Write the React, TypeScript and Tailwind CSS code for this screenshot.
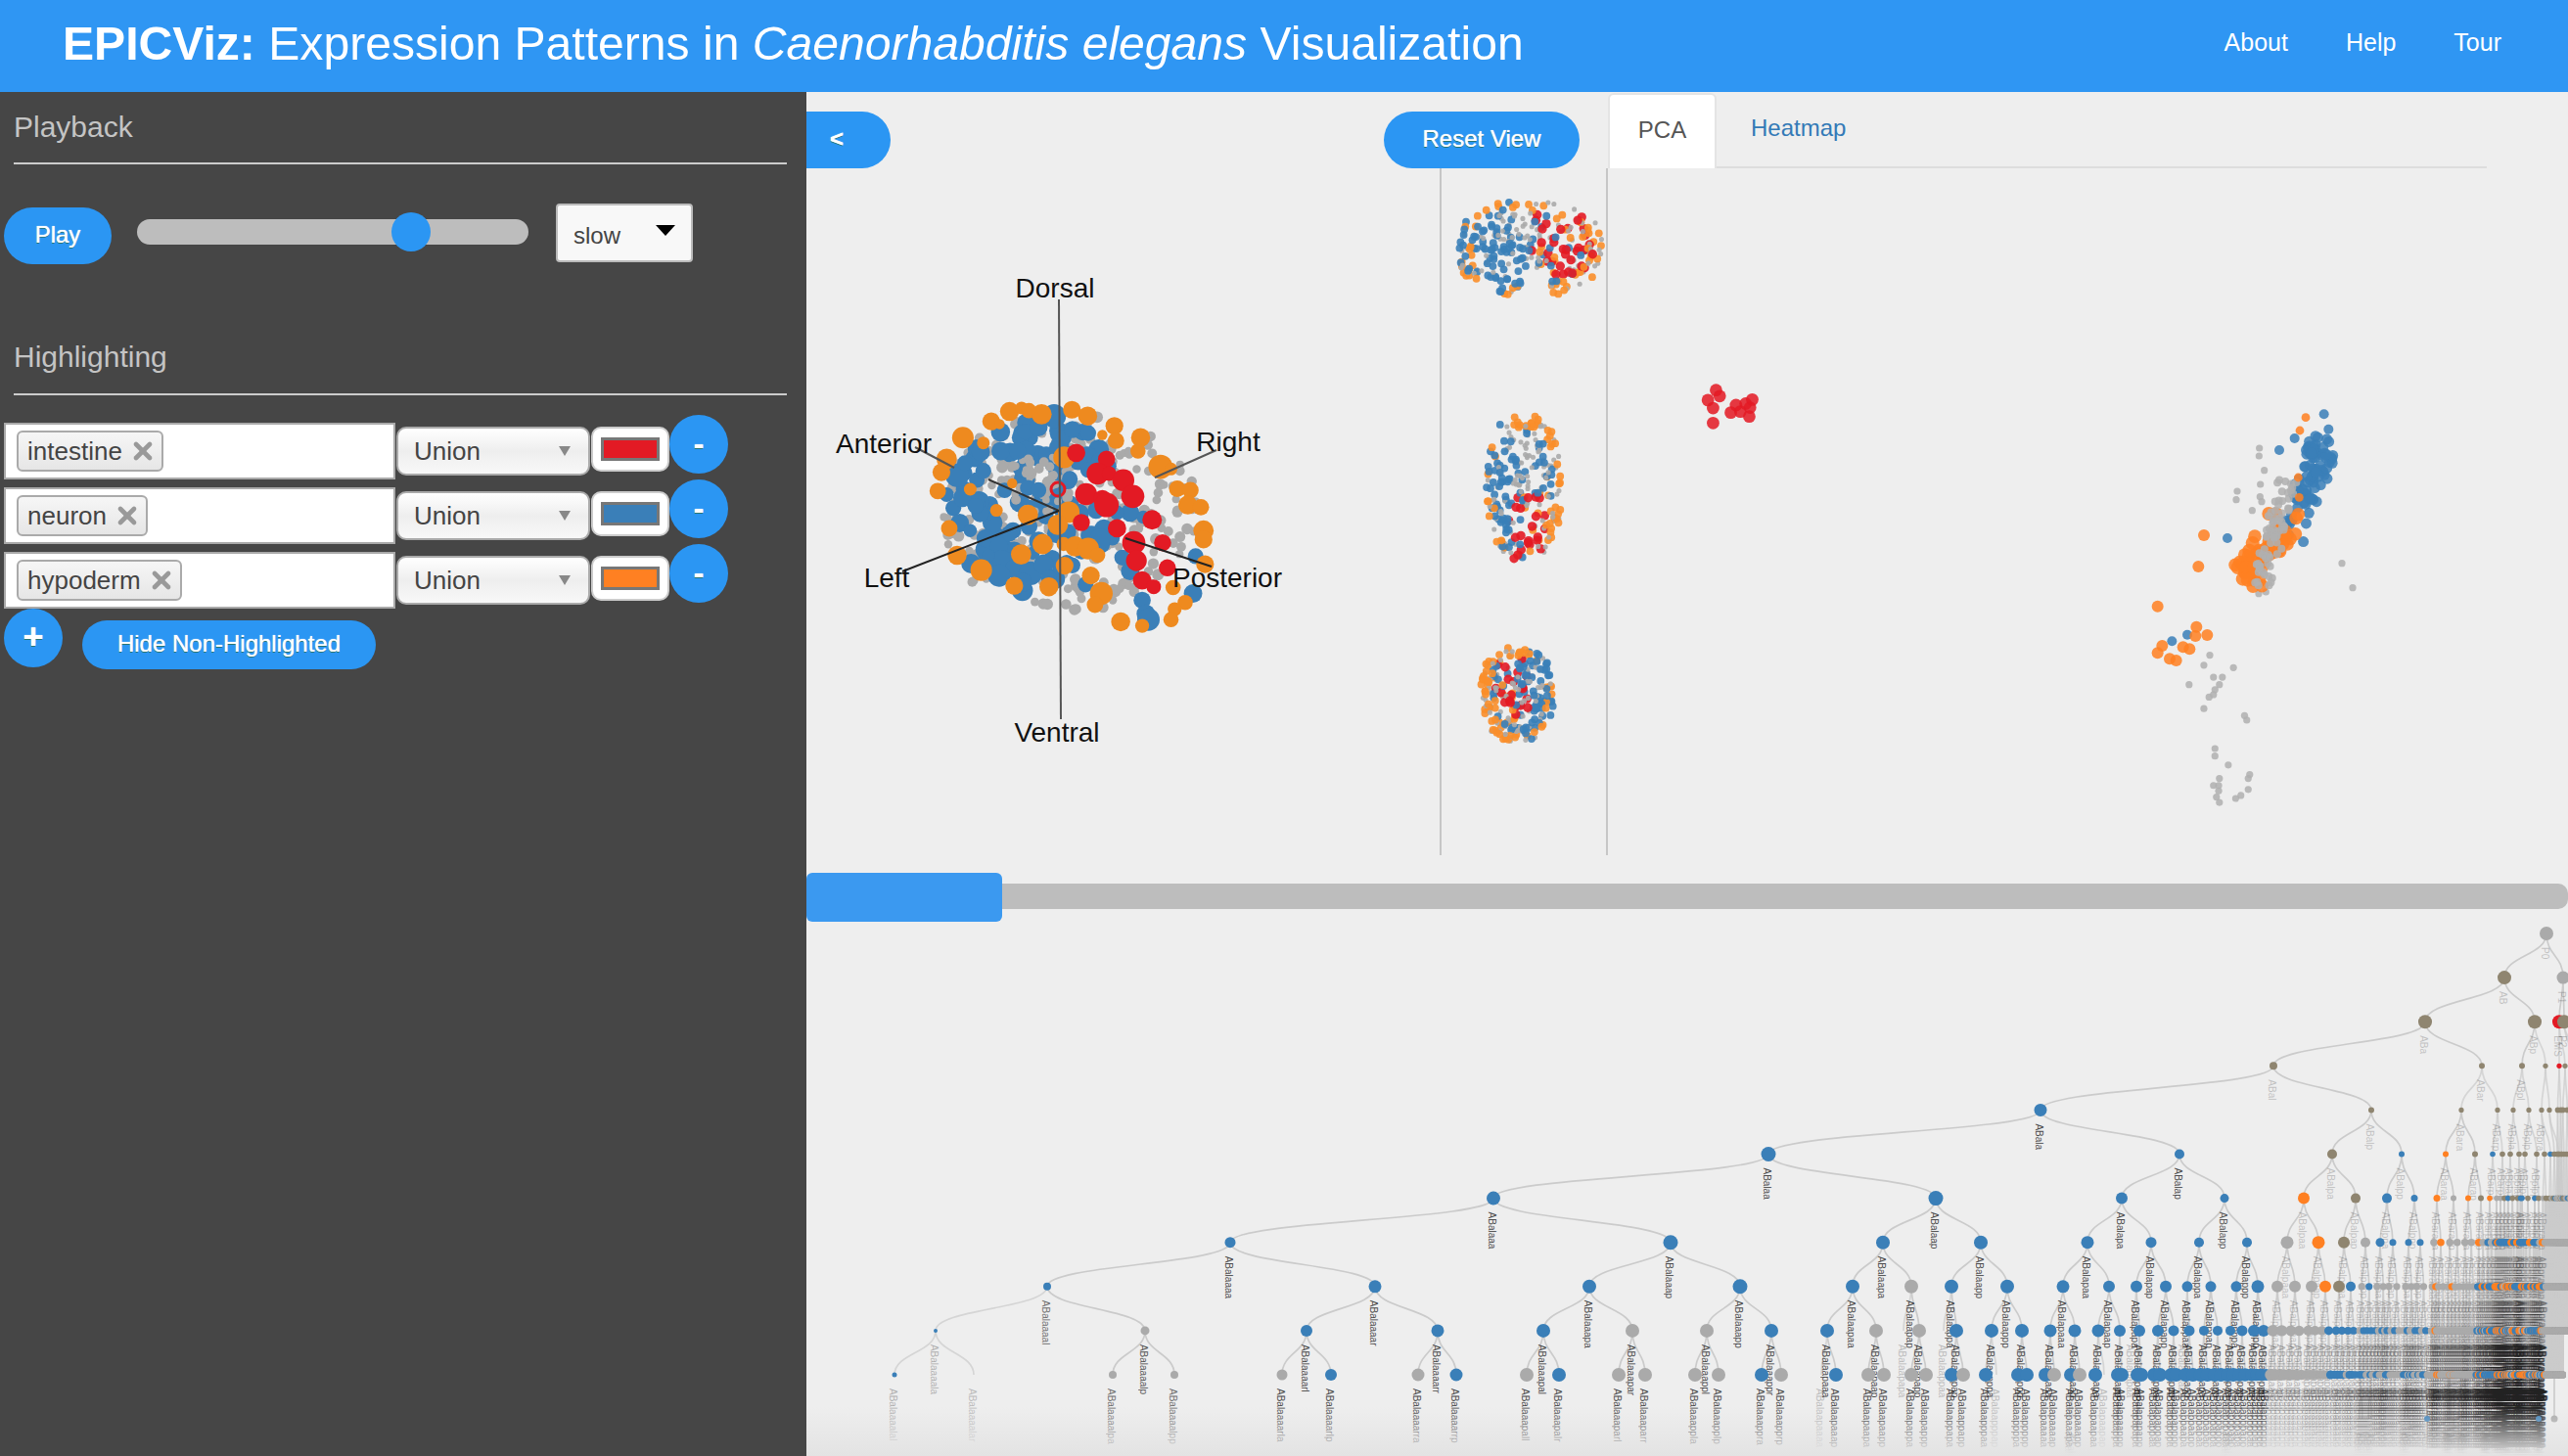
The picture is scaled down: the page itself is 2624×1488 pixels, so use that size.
import { X } from 'lucide-react';

const BLUE = '#3a7fb8';
const ORANGE = '#ff8022';
const RED = '#e31a24';
const GRAY = '#aaaaaa';
const TAUPE = '#8f8570';

function makeRng(seed: number) {
  let s = seed;
  return () => {
    s = (s * 1664525 + 1013904223) % 4294967296;
    return s / 4294967296;
  };
}

type Dot = { x: number; y: number; r: number; c: string };

// ---- 3D embryo, traced off a crop (crop coords -> page coords)
const z3 = (x: number, y: number, r: number, c: string): Dot => ({
  x: 820 + x / 1.867,
  y: 90 + y / 2.178,
  r: r / 2,
  c,
});

const redBig = [[522, 812, 15], [580, 826, 14], [563, 858, 18], [585, 858, 12], [612, 873, 18], [541, 904, 18], [630, 909, 19], [572, 915, 15], [580, 928, 20], [667, 961, 16], [532, 967, 14], [600, 980, 15], [632, 1012, 19], [687, 1012, 14], [637, 1052, 17], [696, 1068, 14], [648, 1096, 15], [670, 1110, 12]];
const orangeBig = [[395, 720, 15], [418, 712, 10], [432, 718, 12], [456, 726, 16], [514, 716, 14], [544, 730, 15], [360, 742, 14], [376, 748, 8], [595, 752, 14], [598, 785, 13], [572, 772, 8], [645, 778, 15], [640, 808, 12], [306, 778, 17], [345, 790, 10], [275, 825, 16], [265, 855, 14], [258, 897, 13], [499, 822, 17], [683, 843, 19], [703, 848, 10], [715, 892, 13], [740, 895, 13], [735, 928, 15], [760, 933, 13], [765, 985, 16], [765, 1005, 14], [430, 950, 16], [508, 944, 17], [487, 972, 16], [280, 980, 13], [458, 1015, 16], [498, 1015, 11], [520, 1020, 16], [545, 1025, 17], [563, 1040, 12], [417, 1038, 16], [295, 1040, 15], [341, 1073, 17], [500, 1063, 14], [550, 1085, 14], [404, 1108, 14], [470, 1110, 15], [570, 1125, 18], [558, 1150, 13], [707, 1112, 12], [768, 1060, 14], [730, 1145, 12], [710, 1160, 11], [703, 1183, 12], [607, 1188, 15], [648, 1197, 11], [370, 940, 10], [320, 893, 10], [400, 880, 8]];
const blueBig = [[480, 730, 18], [425, 765, 12], [450, 755, 14], [515, 760, 13], [545, 768, 12], [340, 810, 14], [378, 808, 14], [295, 862, 18], [345, 852, 12], [310, 835, 12], [305, 912, 14], [330, 930, 12], [275, 905, 11], [430, 890, 12], [450, 895, 12], [410, 808, 13], [545, 850, 12], [510, 870, 12], [625, 945, 14], [600, 945, 11], [560, 940, 13], [650, 955, 10], [300, 968, 14], [320, 985, 10], [375, 1020, 14], [380, 1055, 18], [405, 1070, 15], [375, 1085, 17], [435, 1080, 18], [460, 1060, 15], [420, 1100, 14], [470, 1090, 12], [610, 1045, 12], [625, 1075, 14], [540, 1105, 12], [745, 1125, 14], [750, 1042, 12], [648, 1140, 13], [655, 1170, 14], [660, 1183, 17], [440, 1035, 10], [355, 1040, 10]];

function embryoDots() {
  const rng = makeRng(7);
  const dots: Dot[] = [];
  for (let i = 0; i < 260; i++) {
    const a = rng() * Math.PI * 2;
    const d = Math.sqrt(rng());
    dots.push(z3(505 + Math.cos(a) * d * 250, 945 + Math.sin(a) * d * 225, 8 + rng() * 4, GRAY));
  }
  for (let i = 0; i < 85; i++) {
    const a = rng() * Math.PI * 2;
    const d = Math.sqrt(rng());
    dots.push(z3(440 + Math.cos(a) * d * 165, 925 + Math.sin(a) * d * 195, 15 + rng() * 7, BLUE));
  }
  for (let i = 0; i < 50; i++) {
    dots.push(z3(400 + rng() * 110, 820 + rng() * 130, 7 + rng() * 3, GRAY));
  }
  blueBig.forEach((p) => dots.push(z3(p[0], p[1], p[2] * 1.35, BLUE)));
  orangeBig.forEach((p) => dots.push(z3(p[0], p[1], p[2] * 1.3, '#ee8a1f')));
  redBig.forEach((p) => dots.push(z3(p[0], p[1], p[2] * 1.25, RED)));
  return dots;
}

// ---- three small projections
type ViewOpts = {
  seed: number;
  count: number;
  cx: number;
  cy: number;
  rx: number;
  ry: number;
  red: number[];
  pale: number[];
  blueShift: number;
  notch?: number[];
};

function projection(o: ViewOpts) {
  const rng = makeRng(o.seed);
  const dots: Dot[] = [];
  const inside = (b: number[], x: number, y: number) => x > b[0] && x < b[1] && y > b[2] && y < b[3];
  while (dots.length < o.count) {
    const u = rng() * 2 - 1;
    const v = rng() * 2 - 1;
    const e = Math.pow(Math.abs(u), 2.6) + Math.pow(Math.abs(v), 2.6);
    if (e > 1) continue;
    const x = o.cx + u * o.rx;
    const y = o.cy + v * o.ry;
    if (o.notch && x > o.notch[0] && x < o.notch[1] && y > o.notch[2]) continue;
    const t = rng();
    let c = GRAY;
    if (inside(o.red, x, y) && t < 0.3) c = RED;
    else if (inside(o.pale, x, y)) c = t < 0.75 ? GRAY : BLUE;
    else if (e > 0.55 && t < 0.5) c = '#f98e2a';
    else if (t < 0.42 + (u * o.blueShift > 0 ? 0.36 : 0)) c = BLUE;
    else if (t < 0.68) c = '#f98e2a';
    dots.push({ x, y, r: c === GRAY ? 2.6 : c === RED ? 4.8 : 4, c });
  }
  return dots;
}

// ---- PCA plot. Outliers traced off two crops of the reference.
const z4 = (x: number, y: number, r: number, c: string): Dot => ({
  x: 1440 + x / 1.324,
  y: 90 + y / 1.96,
  r,
  c,
});
const zp = (x: number, y: number, r: number, c: string): Dot => ({
  x: 2180 + x / 3,
  y: 400 + y / 3,
  r,
  c,
});

function pcaDots() {
  const rng = makeRng(21);
  const dots: Dot[] = [];
  const grays = [[1083, 1136], [1075, 1156], [1115, 1161], [1055, 1195], [1130, 1257], [1133, 1266], [1075, 1243], [1090, 1323], [1090, 1338], [1108, 1356], [1137, 1375], [1135, 1383], [1096, 1383], [1088, 1397], [1095, 1397], [1095, 1408], [1135, 1405], [1125, 1417], [1118, 1423], [1092, 1420], [1096, 1431], [1088, 1180], [1096, 1195], [1090, 1205], [1082, 1220], [1088, 1215], [1100, 1180]];
  grays.forEach((p) => dots.push(z4(p[0], p[1], 3.6, '#b0b0b0')));
  [[386, 174], [385, 198], [401, 242], [389, 285], [318, 306], [315, 332], [388, 323], [393, 338], [364, 365], [639, 527], [672, 602], [384, 620], [406, 615]].forEach((p) => dots.push(zp(p[0], p[1], 3.6, '#b0b0b0')));
  for (let i = 0; i < 95; i++) {
    const t = Math.pow(rng(), 1.7);
    dots.push(zp(575 - t * 95 + (rng() - 0.5) * 90, 170 + t * 280 + (rng() - 0.5) * 80, 5.5, BLUE));
  }
  for (let i = 0; i < 50; i++) {
    const t = rng();
    dots.push(zp(470 - t * 125 + (rng() - 0.5) * 90, 400 + t * 170 + (rng() - 0.5) * 70, 6.8, ORANGE));
  }
  [[320, 540], [345, 540], [370, 540], [395, 535], [335, 575], [350, 578], [385, 580], [415, 375], [365, 465], [355, 488]].forEach((p) => dots.push(zp(p[0], p[1], 7, ORANGE)));
  for (let i = 0; i < 75; i++) {
    const t = rng();
    dots.push(zp(480 - t * 90 + (rng() - 0.5) * 60, 270 + t * 320 + (rng() - 0.5) * 50, 4, '#b0b0b0'));
  }
  [[510, 120], [528, 80], [505, 264], [508, 325]].forEach((p) => dots.push(zp(p[0], p[1], 4.4, ORANGE)));
  [[584, 70], [598, 116], [494, 144], [447, 180], [288, 450], [165, 746], [118, 766]].forEach((p) => dots.push(zp(p[0], p[1], 5, BLUE)));
  [[216, 441], [199, 537], [74, 659], [193, 722], [226, 747], [190, 750], [172, 790], [152, 784], [88, 780], [74, 802], [111, 820], [131, 825]].forEach((p) => dots.push(zp(p[0], p[1], 6, ORANGE)));
  [[415, 605], [420, 617], [404, 625], [411, 641], [411, 671], [442, 635], [435, 650], [448, 648], [461, 640], [464, 624], [460, 658], [455, 632]].forEach((p) => dots.push(z4(p[0], p[1], 6.4, RED)));
  return dots;
}

// ---- lineage tree. Known x positions per level, in tree order; a negative x
// is a branch that ends with no marker and no children.
const KNOWN_X: number[][] = [
  [2602],
  [2559, 2619],
  [2478, 2590, 2615, 2620],
  [2323, 2536, 2577, 2601, 2615, 2621, 2630, 2640],
  [2085, 2423, 2515, 2552, 2568, 2584, 2597, 2605],
  [1807, 2227, 2383, 2454, 2499, 2529, 2547, 2557, 2565, 2574, 2580, 2592, 2600, 2606, 2610, 2614],
  [1526, 1978, 2168, 2273, 2354, 2407, 2439, 2467, 2490, 2507, 2522, 2535, 2544, 2551],
  [1257, 1707, 1924, 2024, 2133, 2198, 2247, 2296, 2337, 2369, 2395, 2417, 2432, 2445, 2461, 2473, 2487, 2494],
  [1070, 1405, 1624, 1778, 1893, 1953, 1994, 2051, 2108, 2155, 2183, 2213, 2235, 2259, 2285, 2307, 2327, 2345, 2362, 2376, 2390, 2402],
  [956, 1170, 1335, 1469, 1577, 1668, 1744, 1810, 1867, 1917, -1945, 1961, -1986, 1999, 2035, 2066, 2095, 2120, 2144, 2166, -2178, 2186, 2205, 2221, -2231, 2237, 2252, 2266, 2279, 2291, 2303, 2313],
  [914, -995, 1137, 1200, 1310, 1360, 1449, 1488, 1560, 1593, 1654, 1681, 1732, 1756, 1800, 1820, -1861, 1876, 1909, 1925, 0, 0, 1953, 1968, 0, 0, 1994, 2006, 2029, -2040, 2062, 2071, 2090, 2099, 2116, 2125, 2141, -2150, 2164, 2168, 0, 0, 2184, 2188, 2201, 2207],
];

const KNOWN_C: string[] = [
  'g',
  'tg',
  'ttrt',
  'ttttrttt',
  'bttttttt',
  'bbtbotbttttttbtt',
  'bbbbotbbogotoggt',
  'bbbbbbbbgotgbbbbgo',
  'bbbbbgbbbbbbbbbbgggotbg',
  'bgbbbggbbg-g-bbbbbbb-bbb-bbbbbbb',
  'b-gggbgbgbgggg' + 'bg-bgg--gg--bgb-bbbgbgb-bb--bbbb',
];

const KNOWN_R: number[][] = [
  [7],
  [7, 6.5],
  [7, 7, 7, 7],
  [4, 3, 3, 2.6, 2.6, 2.6, 2.6, 2.6],
  [6.5, 3, 2.6, 2.6, 2.6, 2.6, 2.6, 2.6],
  [7.5, 5, 5, 3, 3, 3],
  [7, 7.5, 6, 4.5, 6, 5, 5, 3.5, 3.5, 3, 3, 3],
  [5.5, 7.5, 7, 7, 6.5, 5.5, 5, 5, 6.5, 6.5, 6, 5, 4.5, 3.5, 3.5, 3.5],
  [4, 6.5, 7, 7.5, 7, 7, 7, 7, 6.5, 6, 6, 6, 5.5, 5.5, 5.5, 6.5, 6, 6, 6, 6, 6, 5],
  [2, 4.5, 6, 6.5, 7, 7, 7, 7, 7, 7, 0, 7, 0, 7, 7, 7, 6.5, 6.5, 6.5, 6, 0, 6, 6, 5.5, 0, 5.5, 5, 5, 5, 5.5, 6, 6],
  [2.5, 0, 4, 4, 5.5, 6, 6.5, 6.5, 7, 7, 7, 7, 7, 7, 7, 7, 0, 7, 7, 7, 0, 0, 7, 7, 0, 0, 7, 7, 7, 0, 7, 7, 7, 7, 7, 7, 7, 0, 7, 7, 0, 0, 7, 7, 7, 7],
];

const LR_PARENTS = new Set(['ABa', 'ABp', 'ABalaaaa', 'ABalaaaala', 'ABalaaaar', 'ABalaaapa', 'ABalaaapal', 'ABalaaapar', 'ABalaaapp', 'ABalaaappa', 'ABalaaappp']);
const TOP_NAMES = ['P0', 'AB', 'P1', 'ABa', 'ABp', 'EMS', 'P2', 'ABal', 'ABar', 'ABpl', 'ABpr', 'MS', 'E', 'C', 'P3'];

type TreeNode = { name: string; level: number; x: number; y: number; r: number; c: string; px: number; py: number; dead: boolean };

const colorOf = (ch: string) =>
  ch === 'b' ? BLUE : ch === 'o' ? ORANGE : ch === 'r' ? RED : ch === 't' ? TAUPE : GRAY;

function denseColor(level: number, x: number, t: number) {
  if (level < 6) return TAUPE;
  if (level === 6) return t < 0.45 ? TAUPE : t < 0.65 ? BLUE : GRAY;
  if (x < 2320) return BLUE;
  if (x < 2375) return GRAY;
  if (x < 2425) return t < 0.7 ? BLUE : GRAY;
  if (x < 2480) return level >= 9 ? (t < 0.6 ? BLUE : GRAY) : GRAY;
  if (x < 2530) return t < 0.12 ? ORANGE : GRAY;
  if (x < 2600) return t < 0.32 ? ORANGE : t < 0.88 ? BLUE : GRAY;
  return GRAY;
}

function buildTree() {
  const rng = makeRng(99);
  const all: TreeNode[] = [];
  let prev: (TreeNode | null)[] = [];
  for (let level = 0; level <= 10; level++) {
    const row: (TreeNode | null)[] = [];
    const y = 954 + level * 45.1;
    for (let i = 0; i < Math.pow(2, level); i++) {
      const parent = level > 0 ? prev[i >> 1] : null;
      if (level > 0 && (!parent || parent.dead)) {
        row.push(null);
        continue;
      }
      const known = KNOWN_X[level][i];
      let x = 0;
      if (known !== undefined) {
        x = Math.abs(known);
      } else {
        const next = prev[(i >> 1) + 1];
        const d = Math.max(0.8, ((next ? next.x : parent!.x + 4) - parent!.x) / 4);
        x = parent!.x + (i & 1 ? d : -d);
      }
      const dead = known !== undefined && known < 0;
      let r = KNOWN_R[level][i];
      if (r === undefined) {
        r = level >= 8 ? Math.min(7, Math.max(3.6, (2560 - x) / 40)) : level === 7 ? 3.8 : 2.8;
      }
      const ch = KNOWN_C[level][i];
      const c = ch && ch !== '-' ? colorOf(ch) : denseColor(level, x, rng());
      let name = TOP_NAMES[i + Math.pow(2, level) - 1] ?? '';
      if (!name) {
        name = parent!.name + (LR_PARENTS.has(parent!.name) ? (i & 1 ? 'r' : 'l') : i & 1 ? 'p' : 'a');
      }
      const node = { name, level, x, y, r: dead ? 0 : r, c, px: parent ? parent.x : x, py: parent ? parent.y : y, dead };
      row.push(node);
      if (x < (level === 10 ? 2619 : 2660)) all.push(node);
    }
    prev = row;
  }
  // a few cells divide once more at the very bottom
  prev.forEach((p) => {
    if (!p || p.x < 2040 || p.x > 2600) return;
    if (rng() > 0.1) return;
    const y = p.y + 45.1;
    [-1.5, 1.5].forEach((d) =>
      all.push({ name: p.name + (d < 0 ? 'a' : 'p'), level: 11, x: p.x + d, y, r: 0, c: GRAY, px: p.x, py: p.y, dead: true }),
    );
  });
  all.push({ name: 'ABplaaappaaa', level: 11, x: 2480, y: 1450, r: 3, c: BLUE, px: 2478, py: 1405, dead: false });
  all.push({ name: 'ABprpaaapaaa', level: 11, x: 2594, y: 1450, r: 3, c: BLUE, px: 2590, py: 1405, dead: false });
  all.push({ name: 'ABprpaapaaaa', level: 11, x: 2610, y: 1450, r: 3.5, c: GRAY, px: 2610, py: 1405, dead: false });
  return all;
}

function labelOpacity(n: TreeNode) {
  if (n.x > 2320) return n.level >= 9 ? 0.3 : 0.22;
  if (n.r === 0) return 0.25;
  return Math.min(0.8, Math.max(0.3, (n.r - 1.5) / 4));
}

const embryo = embryoDots();
const topView = projection({ seed: 11, count: 290, cx: 1563, cy: 247, rx: 76, ry: 50, red: [1565, 1630, 205, 278], pale: [1530, 1585, 208, 240], blueShift: -1, notch: [1556, 1582, 268] });
const midView = projection({ seed: 12, count: 260, cx: 1557, cy: 498, rx: 39, ry: 77, red: [1540, 1582, 505, 578], pale: [1545, 1578, 440, 500], blueShift: -1 });
const lowView = projection({ seed: 13, count: 250, cx: 1550, cy: 714, rx: 38, ry: 49, red: [1526, 1562, 676, 735], pale: [1560, 1580, 680, 710], blueShift: 1 });
const pca = pcaDots();
const tree = buildTree();

function Dots({ dots, opacity }: { dots: Dot[]; opacity?: number }) {
  return (
    <>
      {dots.map((d, i) => (
        <circle key={i} cx={d.x} cy={d.y} r={d.r} fill={d.c} opacity={opacity} />
      ))}
    </>
  );
}

function PillButton({ label, className }: { label: string; className: string }) {
  return (
    <button className={`flex items-center justify-center bg-[#2b96f3] pb-[2px] text-[24px] text-white [text-shadow:0_0_1px_#ffffff,0_1px_0_rgba(0,70,0,0.6)] ${className}`}>
      {label}
    </button>
  );
}

const queries = [
  { tag: 'intestine', swatch: 'bg-[#e31a24]' },
  { tag: 'neuron', swatch: 'bg-[#3a7fb8]' },
  { tag: 'hypoderm', swatch: 'bg-[#ff8022]' },
];

function QueryRow({ tag, swatch }: { tag: string; swatch: string }) {
  return (
    <div className="flex h-[66px] items-start pl-[4px]">
      <div className="mt-[8px] flex h-[58px] w-[400px] items-center border-2 border-[#aaaaaa] bg-white pl-[11px]">
        <span className="flex h-[42px] items-center gap-[7px] rounded-[6px] border-2 border-[#aaaaaa] bg-[linear-gradient(#f6f6f6,#e6e6e6)] pr-[5px] pl-[9px] text-[26px] text-[#444444]">
          {tag}
          <X size={28} strokeWidth={4} className="text-[#999999]" />
        </span>
      </div>
      <div className="mt-[12px] ml-px flex h-[50px] w-[198px] items-center justify-between rounded-[10px] border-2 border-[#aaaaaa] bg-[linear-gradient(#ffffff,#eeeeee_50%,#f8f8f8)] pr-[18px] pl-[16px] text-[26px] text-[#444444]">
        Union
        <svg width="12" height="10" viewBox="0 0 12 10">
          <polygon points="0,0 12,0 6,10" fill="#888888" />
        </svg>
      </div>
      <div className="mt-[12px] ml-px flex h-[46px] w-[80px] items-center justify-center rounded-[10px] border-2 border-[#cccccc] bg-white">
        <span className={`h-[24px] w-[60px] border-[3px] border-[#777777] ${swatch}`} />
      </div>
      <PillButton label="-" className="h-[60px] w-[60px] rounded-full text-[32px] font-bold" />
    </div>
  );
}

export default function App() {
  return (
    <div className="flex h-[1488px] w-[2624px] flex-col overflow-hidden bg-[#eeeeee] font-['Liberation_Sans',Arial,sans-serif]">
      {/* Title bar */}
      <header className="flex h-[94px] shrink-0 items-center justify-between bg-[#2f96f3] pr-[68px] pb-[6px] pl-[64px] text-white">
        <h1 className="text-[48.1px] leading-none font-normal">
          <b>EPICViz:</b> Expression Patterns in <em>Caenorhabditis elegans</em> Visualization
        </h1>
        <nav className="flex gap-[59px] text-[25px]">
          <span>About</span>
          <span>Help</span>
          <span>Tour</span>
        </nav>
      </header>

      <div className="flex min-h-0 flex-1">
        {/* Control panel */}
        <aside className="w-[824px] shrink-0 bg-[#464646]">
          <div className="ml-[14px] h-[74px] w-[790px] border-b-2 border-[#cccccc] pt-[18px] text-[30px] leading-[36px] text-[#c4c4c4]">
            Playback
          </div>
          <div className="mt-[40px] flex h-[62px] items-start pl-[4px]">
            <PillButton label="Play" className="mt-[4px] h-[58px] w-[110px] rounded-full" />
            <div className="relative mt-[16px] ml-[26px] h-[26px] w-[400px] rounded-full bg-[#bdbdbd]">
              <span className="absolute top-[-7px] left-[260px] h-[40px] w-[40px] rounded-full bg-[#2b96f3]" />
            </div>
            <div className="ml-[28px] flex h-[60px] w-[140px] items-center justify-between rounded-[4px] border-2 border-[#bbbbbb] bg-[#f8f8f8] pr-[16px] pl-[16px] text-[24px] text-[#444444]">
              <span className="mt-[6px]">slow</span>
              <svg width="20" height="11" viewBox="0 0 20 11" className="mb-[6px]">
                <polygon points="0,0 20,0 10,11" fill="#000000" />
              </svg>
            </div>
          </div>
          <div className="ml-[14px] flex h-[134px] w-[790px] items-end border-b-2 border-[#cccccc] pb-[19px] text-[30px] leading-[36px] text-[#c4c4c4]">
            Highlighting
          </div>
          <div className="mt-[20px]">
            {queries.map((q) => (
              <QueryRow key={q.tag} tag={q.tag} swatch={q.swatch} />
            ))}
          </div>
          <div className="flex items-start pl-[4px]">
            <PillButton label="+" className="h-[60px] w-[60px] rounded-full text-[36px] font-bold" />
            <PillButton label="Hide Non-Highlighted" className="mt-[12px] ml-[20px] h-[50px] w-[300px] rounded-full" />
          </div>
        </aside>

        {/* Views */}
        <main className="flex min-w-0 flex-1 flex-col">
          <div className="flex h-[798px] shrink-0">
            <div className="flex w-[819px] shrink-0 flex-col">
              <div className="flex h-[78px] shrink-0 items-start justify-between pt-[20px] pr-[29px]">
                <PillButton label="<" className="h-[58px] w-[86px] justify-start rounded-r-full pl-[24px] font-bold" />
                <PillButton label="Reset View" className="h-[58px] w-[200px] rounded-full" />
              </div>
              <div className="flex h-[702px]">
                <svg viewBox="824 172 647 702" className="h-[702px] w-[647px] shrink-0">
                  <Dots dots={embryo} />
                  <circle cx="1081" cy="500" r="7" fill="none" stroke={RED} strokeWidth="3" />
                  <g stroke="#555555" strokeWidth="2" fill="none">
                    <line x1="1082" y1="306" x2="1084" y2="735" />
                    <line x1="935" y1="457" x2="975" y2="478" />
                    <line x1="1010" y1="490" x2="1082" y2="522" stroke="#333333" />
                    <line x1="1150" y1="550" x2="1238" y2="579" stroke="#222222" />
                    <line x1="922" y1="584" x2="1082" y2="522" stroke="#222222" />
                    <line x1="1243" y1="460" x2="1180" y2="488" />
                  </g>
                  <g fontSize="28" fill="#111111" textAnchor="middle">
                    <text x="1078" y="304">Dorsal</text>
                    <text x="1080" y="758">Ventral</text>
                    <text x="903" y="463">Anterior</text>
                    <text x="1255" y="461">Right</text>
                    <text x="906" y="600">Left</text>
                    <text x="1254" y="600">Posterior</text>
                  </g>
                </svg>
                <svg viewBox="1471 172 172 702" className="h-[702px] w-[172px] shrink-0 border-x-2 border-[#c6c6c6]">
                  <Dots dots={topView} opacity={0.9} />
                  <Dots dots={midView} opacity={0.9} />
                  <Dots dots={lowView} opacity={0.9} />
                </svg>
              </div>
            </div>
            <div className="min-w-0 flex-1">
              <div className="mt-px flex h-[77px] w-[898px] border-b-2 border-[#dddddd]">
                <span className="-mb-[2px] flex w-[111px] items-center justify-center rounded-t-[6px] border-x-2 border-t-2 border-[#e4e4e4] bg-white pb-[3px] text-[24px] text-[#555555]">
                  PCA
                </span>
                <span className="flex items-center pb-[3px] pl-[35px] text-[24px] text-[#337ab7]">Heatmap</span>
              </div>
              <svg viewBox="1643 172 981 702" className="h-[702px] w-[981px]">
                <Dots dots={pca} opacity={0.86} />
              </svg>
            </div>
          </div>

          {/* Time scrubber */}
          <div className="flex h-[50px] shrink-0 items-center">
            <span className="h-[50px] w-[200px] rounded-[6px] bg-[#3b99f0]" />
            <span className="mb-[3px] h-[26px] flex-1 rounded-r-[10px] bg-[#bdbdbd]" />
          </div>

          {/* Lineage tree */}
          <div className="relative min-h-0 flex-1">
            <svg viewBox="824 942 1800 546" className="block h-[546px] w-[1800px]">
              <rect x="2540" y="1270" width="60" height="132" fill="#cfcfcf" opacity="0.45" />
              <rect x="2600" y="1225" width="18" height="180" fill="#cdcdcd" />
              <g fill="none" stroke="#cbcbcb" strokeWidth="1.7">
                {tree.filter((n) => n.py !== n.y).map((n, i) => {
                  const mid = (n.py + n.y) / 2;
                  return (
                    <path
                      key={i}
                      d={`M${n.px} ${n.py}C${n.px} ${mid} ${n.x} ${mid} ${n.x} ${n.y}`}
                      opacity={n.r < 3 ? 0.7 : 1}
                    />
                  );
                })}
              </g>
              <g fontSize="10" fill="#222222">
                {tree.filter((n) => n.level < 3 || n.x < 2600).map((n, i) => (
                  <text
                    key={i}
                    transform={`translate(${n.x - 5} ${n.y + 14}) rotate(90)`}
                    opacity={labelOpacity(n)}
                  >
                    {n.name}
                  </text>
                ))}
              </g>
              {tree.filter((n) => n.r > 0).map((n, i) => (
                <circle key={i} cx={n.x} cy={n.y} r={n.r} fill={n.c} />
              ))}
            </svg>
            <div className="pointer-events-none absolute inset-x-0 bottom-0 h-[50px] bg-[linear-gradient(transparent,#e3e3e3)]" />
          </div>
        </main>
      </div>
    </div>
  );
}
